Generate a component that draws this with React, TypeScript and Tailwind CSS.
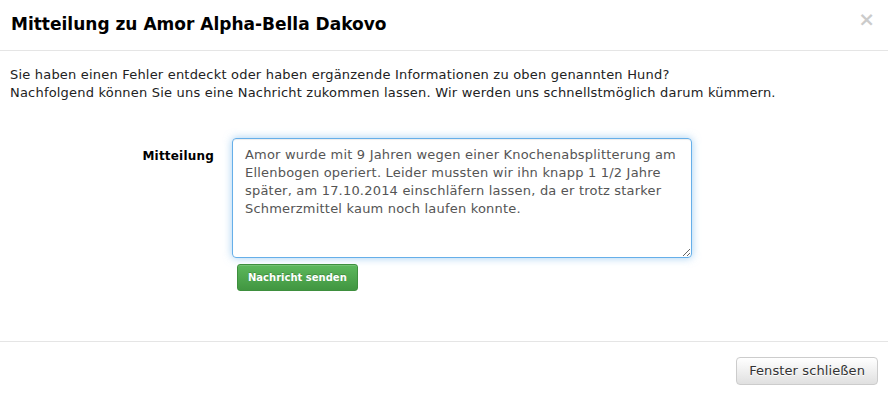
import React from 'react';

const App = () => {
  return (
    <div className="w-[888px] h-[394px] bg-white text-[#222] font-['DejaVu_Sans',Verdana,sans-serif] overflow-hidden">
      <div className="h-[51px] flex items-center justify-between pl-[11px] pr-[13px] border-b border-[#e5e5e5]">
        <h4 className="text-[17px] font-bold text-black">Mitteilung zu Amor Alpha-Bella Dakovo</h4>
        <span className="self-start mt-[9px] text-[20px] font-bold leading-none text-black opacity-20">×</span>
      </div>

      <div className="h-[290px] px-[10px] pt-[15px]">
        <p className="text-[13px] leading-[18px] tracking-[0.2px] text-[#222]">
          Sie haben einen Fehler entdeckt oder haben ergänzende Informationen zu oben genannten Hund?
          <br />
          Nachfolgend können Sie uns eine Nachricht zukommen lassen. Wir werden uns schnellstmöglich darum kümmern.
        </p>

        <div className="flex mt-[36px]">
          <label className="w-[222px] pr-[18px] text-right text-[12px] tracking-[0.2px] font-bold text-black pt-[9px] leading-[18px]">
            Mitteilung
          </label>
          <div className="flex flex-col">
            <textarea
              className="w-[460px] h-[120px] rounded-[4px] border border-[#66afe9] px-[12px] py-[7px] text-[13px] leading-[18px] tracking-[0.2px] text-[#555] outline-none shadow-[inset_0_1px_1px_rgba(0,0,0,0.075),0_0_8px_rgba(102,175,233,0.6)] font-['DejaVu_Sans',Verdana,sans-serif]"
              defaultValue="Amor wurde mit 9 Jahren wegen einer Knochenabsplitterung am Ellenbogen operiert. Leider mussten wir ihn knapp 1 1/2 Jahre später, am 17.10.2014 einschläfern lassen, da er trotz starker Schmerzmittel kaum noch laufen konnte."
            />
            <div className="mt-[6px] ml-[5px]">
              <button className="h-[27px] px-[10px] rounded-[3px] border border-[#3e8f3e] bg-gradient-to-b from-[#5cb85c] to-[#419641] text-white text-[10px] font-bold [text-shadow:0_-1px_0_rgba(0,0,0,0.2)] shadow-[inset_0_1px_0_rgba(255,255,255,0.15)]">
                Nachricht senden
              </button>
            </div>
          </div>
        </div>
      </div>

      <div className="border-t border-[#e5e5e5] flex justify-end pt-[15px] pr-[10px]">
        <button className="h-[28px] px-[12px] rounded-[4px] border border-[#ccc] bg-gradient-to-b from-white to-[#e0e0e0] text-[#333] text-[13px] tracking-[0.1px] [text-shadow:0_1px_0_#fff]">
          Fenster schließen
        </button>
      </div>
    </div>
  );
};

export default App;
